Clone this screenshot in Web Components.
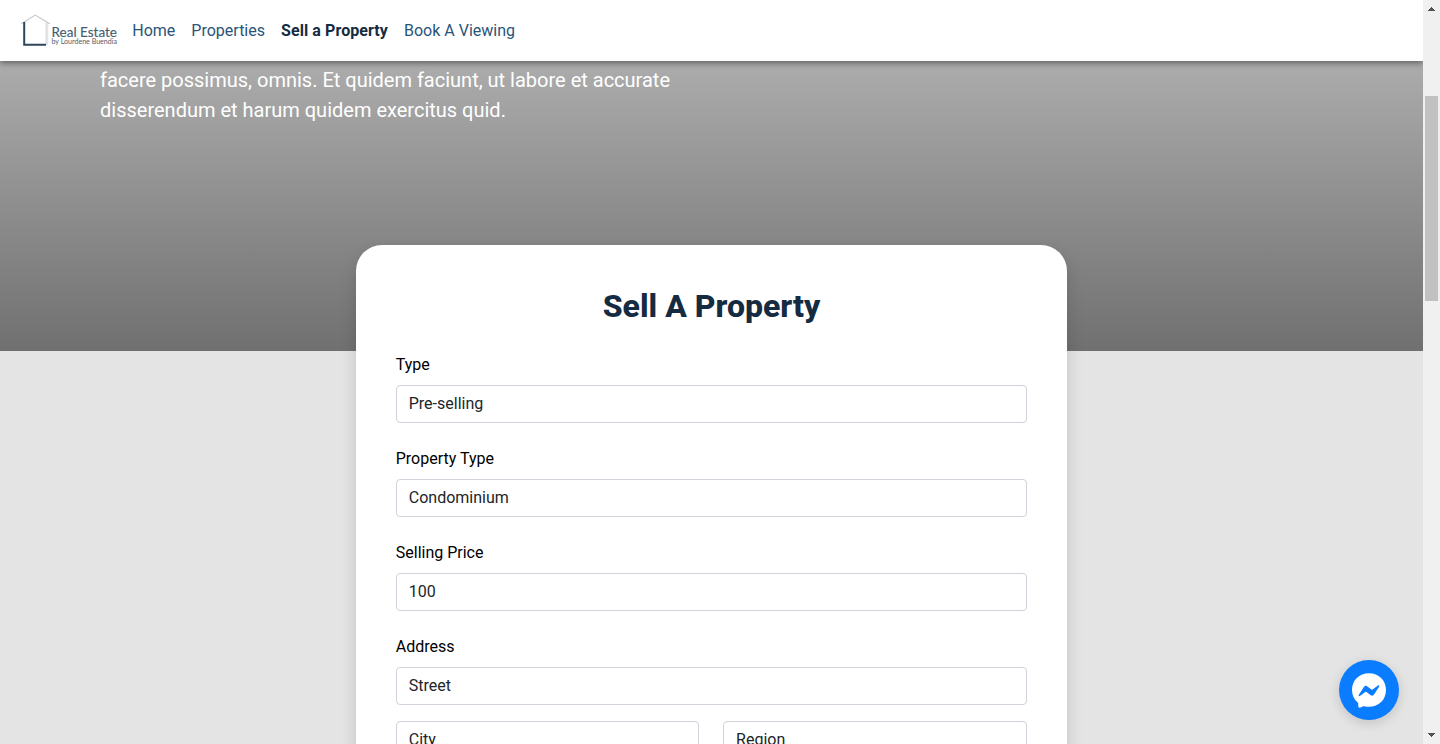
<!DOCTYPE html>
<html lang="en"><head><meta charset="utf-8"><title>Sell a Property</title>
<style>html,body{margin:0;height:100%;overflow:hidden}body{font:16px/24px Roboto,"Liberation Sans",sans-serif;background:#e4e4e4}</style></head>
<body>
<re-app></re-app>
<script>
const define=(name,html)=>customElements.define(name,class extends HTMLElement{
  constructor(){super();const t=document.createElement('template');t.innerHTML=html;
    this.attachShadow({mode:'open'}).append(t.content.cloneNode(true));}
});
define('re-logo',`<style>:host{display:block;width:97px;height:37px}svg{display:block}</style>
<svg width="97" height="37" viewBox="21 12 97 37" fill="none">
<path d="M45.3 22.500h3V44.800h-3z" fill="#dfe4e8"/>
<path d="M21.300 23.800 35.300 15.100 49.800 23.800" stroke="#c3c6ca" stroke-width="1.1"/>
<path d="M24.200 22V44.700H46" stroke="#2c465c" stroke-width="2"/>
<text x="51.500" y="36.800" font-family="Lato,sans-serif" font-size="13.8" textLength="65.500" lengthAdjust="spacingAndGlyphs" fill="#465c70" stroke="#465c70" stroke-width=".15">Real Estate</text>
<text x="51.500" y="44.400" font-family="Lato,sans-serif" font-size="7" textLength="65.500" lengthAdjust="spacingAndGlyphs" fill="#4c6072">by Lourdene Buendia</text>
</svg>`);
define('re-link',`<style>:host{display:block;color:#2a5478;white-space:nowrap}:host([active]){color:#142b41;font-weight:700;letter-spacing:.08px}</style><slot></slot>`);
define('re-nav',`<style>:host{display:flex;align-items:center;box-sizing:border-box;height:61px;padding-left:21px;background:#fff;box-shadow:0 2px 6px rgba(0,0,0,.45);position:relative;z-index:2}
nav{display:flex;gap:16px;margin-left:14.300px}</style><re-logo></re-logo><nav><slot></slot></nav>`);
define('re-hero',`<style>:host{display:block;box-sizing:border-box;height:290px;padding:4px 0 0 100px;background:linear-gradient(#acacac,#707070);color:#fff;font-size:20px;line-height:30px}p{margin:0;width:600px}</style><p><slot></slot></p>`);
define('re-input',`<style>:host{display:block;box-sizing:border-box;height:38px;padding:6px 12px;border:1px solid #ced4da;border-radius:4px;background:#fff;color:#212529}</style><slot></slot>`);
define('re-field',`<style>:host{display:grid;gap:8px}div{display:grid;gap:16px}label{color:#000}</style><label><slot name="label"></slot></label><div><slot></slot></div>`);
define('re-row',`<style>:host{display:grid;grid-template-columns:303.300px 1fr;gap:24px}</style><slot></slot>`);
define('re-card',`<style>:host{display:block;box-sizing:border-box;width:50%;height:700px;margin:-106px auto 0;padding:42px 40px;border-radius:26px;background:#fff;box-shadow:0 8px 16px rgba(0,0,0,.15);position:relative}
h1{margin:0 0 28px;font-size:32px;line-height:38px;font-weight:800;text-align:center;color:#142b41}form{display:grid;gap:24px}</style><h1><slot name="title"></slot></h1><form><slot></slot></form>`);
define('re-messenger',`<style>:host{display:block;position:absolute;left:1339px;top:660px;width:60px;height:60px;border-radius:50%;background:#0a7cff;box-shadow:0 3px 12px rgba(0,0,0,.15);z-index:3}svg{display:block}</style>
<svg width="60" height="60" viewBox="0 0 60 60"><path d="M30 13.3C20.3 13.3 13 20.2 13 30c0 5.1 2.1 9.5 5.7 12.5.4.4.5.8.5 1.3l.1 2.8c0 .9.9 1.4 1.7 1.1l3.2-1.4c.3-.1.7-.1 1-.1 1.5.4 3.1.6 4.8.6 9.7 0 17-6.9 17-16.8S39.7 13.3 30 13.3Z" fill="#fff"/><path d="m19.7 35.1 5-7.9a2.6 2.6 0 0 1 3.7-.7l4 3a1 1 0 0 0 1.2 0l5.4-4.1c.7-.5 1.6.3 1.2 1l-5 7.9a2.6 2.6 0 0 1-3.7.7l-4-3a1 1 0 0 0-1.2 0l-5.400 4.100c-.7.5-1.6-.3-1.2-1Z" fill="#0a7cff"/></svg>`);
define('re-scrollbar',`<style>:host{display:flex;flex-direction:column;align-items:center;background:#f0f0f0;height:744px}svg{display:block;flex:none}.thumb{width:13px;height:205px;margin:79px 2px 0;background:#c1c1c1;align-self:stretch}.down{margin-top:auto}</style>
<svg width="17" height="17" shape-rendering="crispEdges"><path d="M8 7h1v1h1v1h1v1h1v1H5v-1h1V9h1V8h1z" fill="#505050"/></svg><div class="thumb"></div><svg class="down" width="17" height="17" shape-rendering="crispEdges"><path d="M5 6h7v1h-1v1h-1v1H9v1H8V9H7V8H6V7H5z" fill="#505050"/></svg>`);
define('re-app',`<style>:host{display:grid;grid-template-columns:1423px 17px;height:744px;overflow:hidden}main{height:744px;overflow:hidden}</style>
<main><re-nav><re-link>Home</re-link><re-link>Properties</re-link><re-link active>Sell a Property</re-link><re-link>Book A Viewing</re-link></re-nav>
<re-hero>facere possimus, omnis. Et quidem faciunt, ut labore et accurate<br>disserendum et harum quidem exercitus quid.</re-hero>
<re-card><span slot="title">Sell A Property</span>
<re-field><span slot="label">Type</span><re-input>Pre-selling</re-input></re-field>
<re-field><span slot="label">Property Type</span><re-input>Condominium</re-input></re-field>
<re-field><span slot="label">Selling Price</span><re-input>100</re-input></re-field>
<re-field><span slot="label">Address</span><re-input>Street</re-input><re-row><re-input>City</re-input><re-input>Region</re-input></re-row></re-field>
</re-card></main><re-scrollbar></re-scrollbar><re-messenger></re-messenger>`);
</script></body></html>
